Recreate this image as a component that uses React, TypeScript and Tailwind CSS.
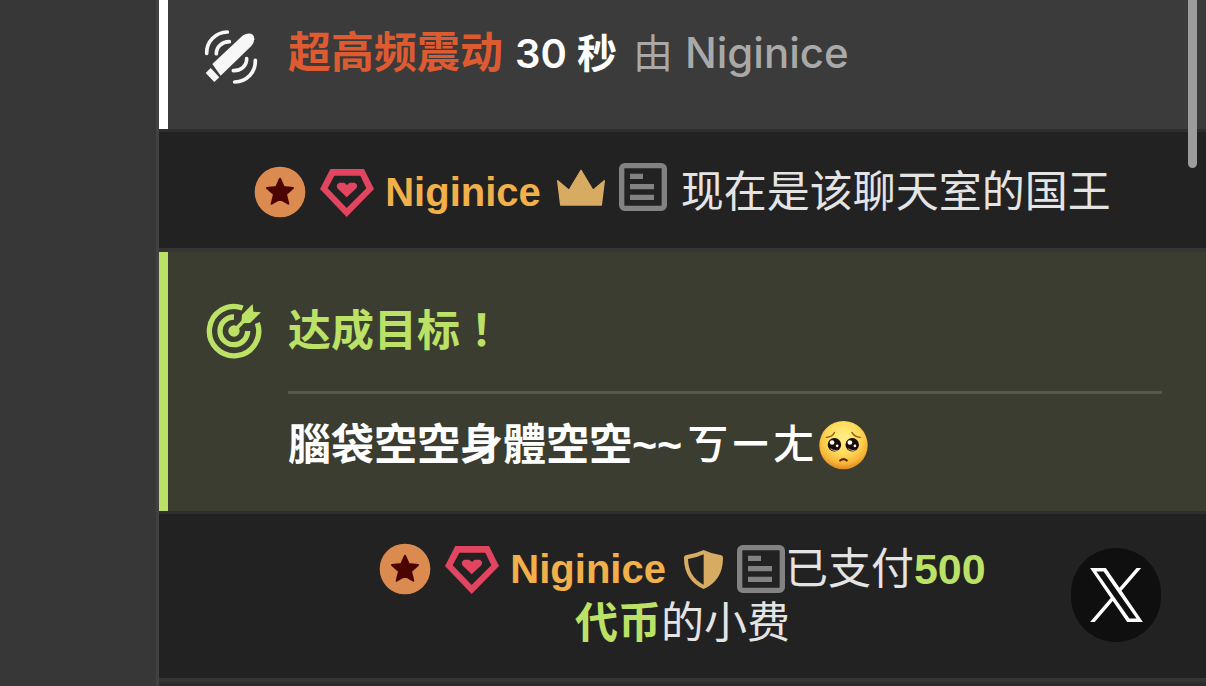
import type { ReactNode } from "react";

const UI = "font-['Inter','Noto_Sans_CJK_SC',sans-serif]";
const CHAT = "font-['Liberation_Sans','Noto_Sans_CJK_SC',sans-serif]";
const CHAT_TC = "font-['Liberation_Sans','Noto_Sans_CJK_TC',sans-serif]";

function VibeIcon() {
  return (
    <svg aria-hidden="true" viewBox="162 87 162 168" className="h-14 w-[54px] shrink-0" fill="none">
      <path d="M187 192 279 106Q291 98 303 101Q313 105 313 118Q312 129 304 138L212 227Z" fill="#f7f7f7" />
      <path d="M182 204 208 232 193 246 167 219Z" fill="#f7f7f7" />
      <g stroke="#f7f7f7" strokeWidth="11" strokeLinecap="round">
        <path d="M170 160C169 125 196 97 232 96" />
        <path d="M199 161C199 140 216 125 238 125" />
        <path d="M290 176C291 198 271 213 250 212" />
        <path d="M316 181C317 217 291 245 254 246" />
      </g>
    </svg>
  );
}

function StarBadge() {
  return (
    <svg aria-hidden="true" viewBox="45 45 156 156" className="size-[52px] shrink-0">
      <circle cx="123" cy="123" r="76" fill="#dc8b50" />
      <path
        d="M123 83 134 108 162 111 141 130 148 158 123 144 98 158 105 130 84 111 112 108Z"
        fill="#4b0402"
        stroke="#4b0402"
        strokeWidth="6"
        strokeLinejoin="round"
      />
    </svg>
  );
}

function GemBadge() {
  return (
    <svg aria-hidden="true" viewBox="243 60 162 147" className="h-[49px] w-[54px] shrink-0">
      <path
        fillRule="evenodd"
        d="M274 63H375L405 123 323 207 243 123ZM286 83 266 121 323 180 382 121 364 83Z"
        fill="#e2455f"
      />
      <path d="M323 148 295 121Q291 115 295 109L301 104H316L324 111 332 104H347L353 109Q357 115 352 121Z" fill="#e2455f" />
    </svg>
  );
}

function CrownIcon() {
  return (
    <svg aria-hidden="true" viewBox="54 52 144 111" className="h-[37px] w-12 shrink-0">
      <path
        d="M56 87 90 116 126 56 162 116 196 87 187 160H65Z"
        fill="#d8ab63"
        stroke="#d8ab63"
        strokeWidth="4"
        strokeLinejoin="round"
      />
    </svg>
  );
}

function ShieldIcon() {
  return (
    <svg aria-hidden="true" viewBox="72 57 117 117" className="size-[39px] shrink-0">
      <path
        fillRule="evenodd"
        d="M131 57Q158 70 184 73Q190 75 189 83Q188 148 131 174Q73 148 72 83Q71 75 77 73Q104 70 131 57ZM131 70Q108 81 84 84Q85 138 131 161Z"
        fill="#d8ab63"
      />
    </svg>
  );
}

function NoteButton() {
  return (
    <button type="button" aria-label="Note" className="block size-12 shrink-0">
      <svg aria-hidden="true" viewBox="0 0 144 144" className="size-12">
        <rect x="8" y="8" width="128" height="128" rx="9" fill="none" stroke="#828282" strokeWidth="16" />
        <path d="M33 32H72V48H33ZM33 63H105V79H33ZM33 95H105V111H33Z" fill="#828282" />
      </svg>
    </button>
  );
}

function TargetIcon() {
  return (
    <svg aria-hidden="true" viewBox="168 186 168 168" className="size-14 shrink-0">
      <g fill="none" stroke="#bbe167" strokeWidth="16">
        <path d="M278 201A74 74 0 1 0 322 246" />
        <path d="M252 228A41.500 41.500 0 1 0 293 270" />
      </g>
      <circle cx="252" cy="270" r="17" fill="#bbe167" />
      <path d="M258 264 283 238" stroke="#bbe167" strokeWidth="11" />
      <path d="M274 247 276 221 308 189 310 212 333 214 300 246Z" fill="#bbe167" />
    </svg>
  );
}

function PleadingFace() {
  return (
    <svg role="img" aria-label="🥺" viewBox="586 59 146 149" className="h-[50px] w-[49px] shrink-0">
      <defs>
        <radialGradient id="face" cx="0.5" cy="0.35" r="0.65">
          <stop offset="0" stopColor="#fff08a" />
          <stop offset="0.5" stopColor="#ffdc5c" />
          <stop offset="0.82" stopColor="#f7b536" />
          <stop offset="1" stopColor="#dd8620" />
        </radialGradient>
      </defs>
      <circle cx="659" cy="134" r="72" fill="url(#face)" />
      <circle cx="632" cy="133" r="20" fill="#180c05" />
      <circle cx="685" cy="133" r="20" fill="#180c05" />
      <circle cx="625" cy="126" r="7" fill="#fff" />
      <circle cx="678" cy="126" r="7" fill="#fff" />
      <circle cx="640" cy="136" r="4" fill="#fff" />
      <circle cx="693" cy="136" r="4" fill="#fff" />
      <path d="M620 144Q630 153 642 148M673 144Q683 153 695 148" stroke="#b9a08c" strokeWidth="3" fill="none" />
      <g fill="none" strokeLinecap="round">
        <path d="M608 111Q626 109 632 96M684 96Q691 109 709 111" stroke="#96580f" strokeWidth="4" />
        <path d="M649 180Q659 171 669 180" stroke="#5a2406" strokeWidth="6" />
      </g>
    </svg>
  );
}

function UserTag({ children }: { children: ReactNode }) {
  return (
    <>
      <StarBadge />
      <span className="ml-3.5">
        <GemBadge />
      </span>
      <a href="#niginice" className="ml-[11px] text-[40px] font-bold text-[#f2b04a]">
        Niginice
      </a>
      {children}
    </>
  );
}

export default function App() {
  return (
    <div className="relative flex h-screen overflow-hidden bg-[#222222]">
      <aside className="w-[159px] shrink-0 border-r-3 border-[#414141] bg-[#373737]" />
      <main className="min-w-0 flex-1">
        <section
          className={`flex items-start border-l-9 border-white bg-[#3b3b3b] pt-[22px] pr-11 pb-11 pl-9 leading-[60px] ${UI}`}
        >
          <span className="mt-[7px]">
            <VibeIcon />
          </span>
          <p className="ml-[30px] flex items-baseline gap-3 text-[40px] font-medium whitespace-nowrap text-[#a9a9a9]">
            <span className="text-[43px] font-semibold text-[#de5a30]">超高频震动</span>
            <span className="font-semibold text-white">30 秒</span>
            <span className="ml-1 font-normal">由</span>
            <a href="#niginice" className="text-[42px]">
              Niginice
            </a>
          </p>
        </section>

        <section
          className={`flex items-center justify-center border-t-3 border-b-4 border-t-[#2e2e2e] border-b-[#353535] px-11 pt-[30px] pb-[26px] leading-[60px] whitespace-nowrap ${CHAT}`}
        >
          <UserTag>
            <span className="mb-2.5 ml-4">
              <CrownIcon />
            </span>
            <span className="mx-3.5 mb-2.5">
              <NoteButton />
            </span>
          </UserTag>
          <span className="text-[43px] text-[#e4e4e4]">现在是该聊天室的国王</span>
        </section>

        <section className={`flex items-start border-l-9 border-[#bbe167] bg-[#3a3d30] pt-12 pr-11 pb-9 pl-[38px] ${UI}`}>
          <span className="mt-[3px]">
            <TargetIcon />
          </span>
          <div className="ml-[26px] min-w-0 flex-1 text-[43px] leading-[60px] font-bold">
            <h2 className="border-b-3 border-[#55584a] pb-[30px] text-[#bbe167]">
              达成目标<span className={CHAT_TC}>！</span>
            </h2>
            <p className={`flex items-center gap-1 pt-[21px] whitespace-nowrap text-white ${CHAT_TC}`}>
              <span>腦袋空空身體空空~~</span>
              <span className="font-medium">ㄎㄧㄤ</span>
              <PleadingFace />
            </p>
          </div>
        </section>

        <section
          className={`border-t-3 border-b-4 border-t-[#2e2e2e] border-b-[#353535] px-11 py-7 text-[43px] leading-[54px] text-[#e4e4e4] ${CHAT}`}
        >
          <div className="flex items-center justify-center whitespace-nowrap">
            <UserTag>
              <span className="ml-[18px]">
                <ShieldIcon />
              </span>
              <span className="ml-3.5">
                <NoteButton />
              </span>
            </UserTag>
            <span>
              已支付<b className="text-[#bbe167]">500</b>
            </span>
          </div>
          <p className="text-center">
            <b className="text-[#bbe167]">代币</b>的小费
          </p>
        </section>
        <div className="h-10 bg-[#2c2c2c]" />
      </main>

      <div className="absolute top-0 right-[9px] h-[168px] w-[9px] rounded-b-full bg-[#9c9c9c]" />
      <a
        href="#x"
        aria-label="X"
        className="absolute right-[45px] bottom-11 flex h-[94px] w-[90px] items-center justify-center rounded-full bg-[#0f0f0f]"
      >
        <svg aria-hidden="true" viewBox="0 0 1200 1227" className="h-[54px] w-[53px]">
          <path
            fill="#fff"
            d="M714.163 519.284L1160.89 0H1055.03L667.137 450.887L357.328 0H0L468.492 681.821L0 1226.370H105.866L515.491 750.218L842.672 1226.370H1200L714.137 519.284H714.163ZM569.165 687.828L521.697 619.934L144.011 79.694H306.615L611.412 515.685L658.880 583.579L1055.080 1150.300H892.476L569.165 687.854V687.828Z"
          />
        </svg>
      </a>
    </div>
  );
}
